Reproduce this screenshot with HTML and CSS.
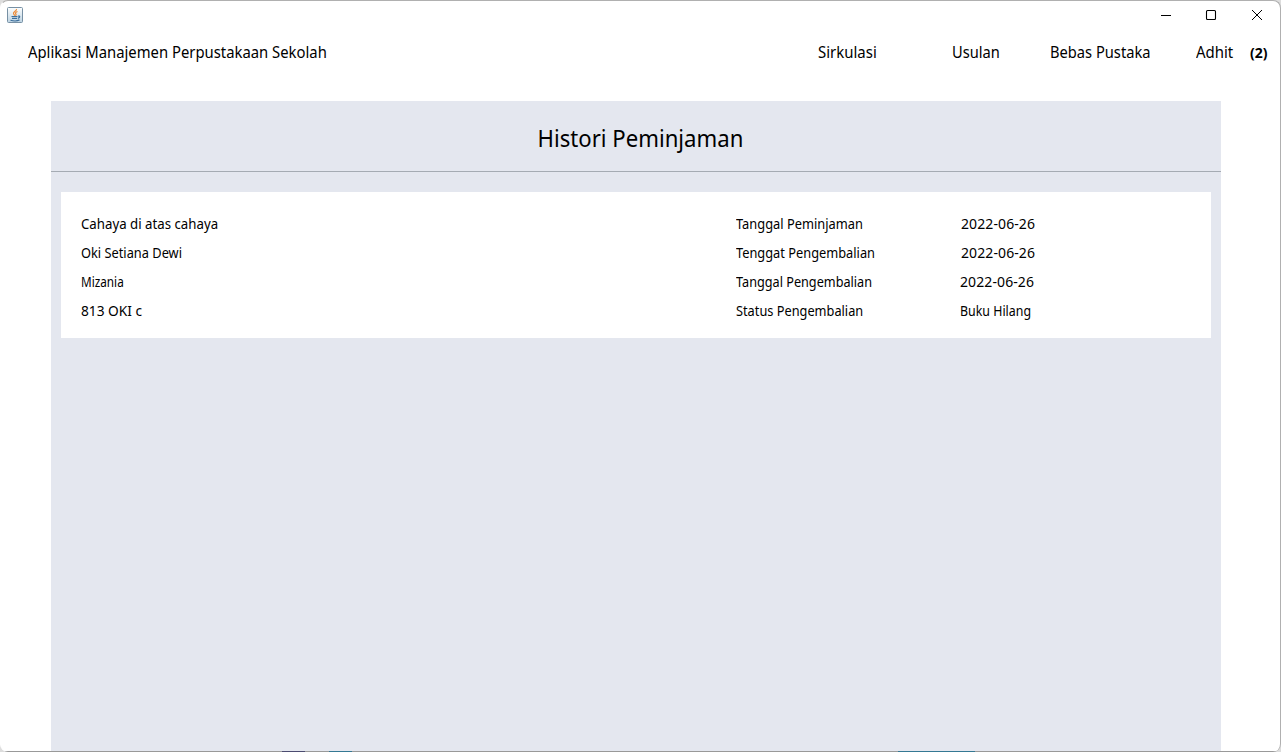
FILE: index.html
```html
<!DOCTYPE html>
<html lang="id">
<head>
<meta charset="utf-8">
<title>Aplikasi Manajemen Perpustakaan Sekolah</title>
<link rel="stylesheet" href="styles.css">
</head>
<body>
<div class="window">
  <header class="titlebar">
    <svg class="app-icon" width="16" height="16" viewBox="0 0 16 16">
      <defs><linearGradient id="tile" x2="0" y2="1"><stop stop-color="#fdfefe"/><stop offset="1" stop-color="#bdd3e2"/></linearGradient></defs>
      <rect x=".5" y=".5" width="15" height="15" rx="1" fill="url(#tile)" stroke="#7790a4"/>
      <path d="M9.500 2C10 4 6 4.500 6.500 6.500C6.700 7.500 7.500 8 7.800 8.700M10.500 4.500C8 5.500 8.200 6.500 9 7.200C9.300 7.800 8.800 8.300 8.500 8.700" fill="none" stroke="#ee8a35" stroke-width="1.200"/>
      <path d="M4.500 9.500H10.500M5 11.300H10M11 9.200C13.500 8.500 13 10.800 10.800 11.300M3.500 13.200C6 14 10.500 14 12.500 12.900" fill="none" stroke="#3d6f9c" stroke-width="1.200"/>
    </svg>
    <svg class="controls" width="104" height="12" viewBox="0 0 104 12" fill="none" stroke="#000">
      <path d="M1 6.500H11" shape-rendering="crispEdges"/>
      <rect x="46.500" y="1.500" width="9" height="9" rx="1" stroke-width="1.100"/>
      <path d="M92 1L102 11M102 1L92 11"/>
    </svg>
  </header>
  <nav class="nav">
    <span class="brand">Aplikasi Manajemen Perpustakaan Sekolah</span>
    <span class="circulation">Sirkulasi</span>
    <span class="proposal">Usulan</span>
    <span class="clearance">Bebas Pustaka</span>
    <span class="user">Adhit</span>
    <b class="count">(2)</b>
  </nav>
  <main class="panel">
    <h1 class="heading"><span>Histori Peminjaman</span></h1>
    <section class="card">
      <div class="column book">
        <span class="book-title">Cahaya di atas cahaya</span>
        <span class="author">Oki Setiana Dewi</span>
        <span class="publisher">Mizania</span>
        <span class="call-number">813 OKI c</span>
      </div>
      <div class="column labels">
        <span class="borrowed">Tanggal Peminjaman</span>
        <span class="due">Tenggat Pengembalian</span>
        <span class="returned">Tanggal Pengembalian</span>
        <span class="state">Status Pengembalian</span>
      </div>
      <div class="column values">
        <span class="date inset">2022-06-26</span>
        <span class="date inset">2022-06-26</span>
        <span class="date">2022-06-26</span>
        <span class="result">Buku Hilang</span>
      </div>
    </section>
  </main>
  <div class="edge"><i class="mark navy"></i><i class="mark teal"></i><i class="mark wide"></i></div>
</div>
</body>
</html>
```
FILE: styles.css
```css
* { box-sizing: border-box; }
body { margin: 0; background: #ddd; overflow: hidden; color: #000; font-family: "Noto Sans", sans-serif; }
.window { position: relative; display: flex; flex-direction: column; width: 1281px; height: 752px; background: #fff; border: 1px solid #b0b0b0; border-left-color: #fff; border-bottom: 0; border-radius: 8px; overflow: hidden; }
.titlebar { display: flex; justify-content: space-between; height: 29px; padding: 6px 16px 0 6px; }
.controls { margin-top: 2px; }
.nav { display: grid; grid-template-columns: 790px 134px 98px 146px 54px 1fr; justify-items: start; height: 71px; padding: 10px 0 0 27px; font-size: 16px; line-height: 24px; white-space: nowrap; }
.nav span, .column span { transform-origin: left; }
.brand { transform: scaleX(.927); }
.circulation { transform: scaleX(.935); }
.proposal { transform: scaleX(.915); }
.clearance { transform: scaleX(.917); }
.user { transform: scaleX(.935); }
.count { font-size: 14px; line-height: 25px; }
.panel { flex: 1; width: 1170px; margin-left: 50px; background: #e4e7ef; }
.heading { display: flex; justify-content: center; height: 71px; margin: 0; padding: 19px 0 0 9px; border-bottom: 1px solid #a5abb3; font-size: 24px; font-weight: 400; line-height: 36px; }
.heading span { transform: scaleX(.923); }
.card { display: grid; grid-template-columns: 655px 224px 1fr; width: 1150px; height: 146px; margin: 20px 10px 0; padding: 17px 20px 0; background: #fff; font-size: 14px; }
.column { display: flex; flex-direction: column; align-items: flex-start; line-height: 29px; white-space: nowrap; }
.column .book-title { transform: scaleX(.946); }
.column .author { transform: scaleX(.915); }
.column .publisher { transform: scaleX(.84); }
.column .call-number { transform: scaleX(.98); }
.column .borrowed { transform: scaleX(.918); }
.column .due { transform: scaleX(.915); }
.column .returned { transform: scaleX(.905); }
.column .state { transform: scaleX(.912); }
.column .result { transform: scaleX(.885); }
.date { letter-spacing: .1px; }
.inset { padding-left: 1px; }
.edge { position: absolute; left: 0; right: 0; bottom: 0; height: 1px; background: #999; }
.mark { position: absolute; height: 1px; top: 0; }
.navy { left: 281px; width: 23px; background: #4b4b70; }
.teal { left: 328px; width: 23px; background: #347893; }
.wide { left: 897px; width: 77px; background: #347893; }
```
